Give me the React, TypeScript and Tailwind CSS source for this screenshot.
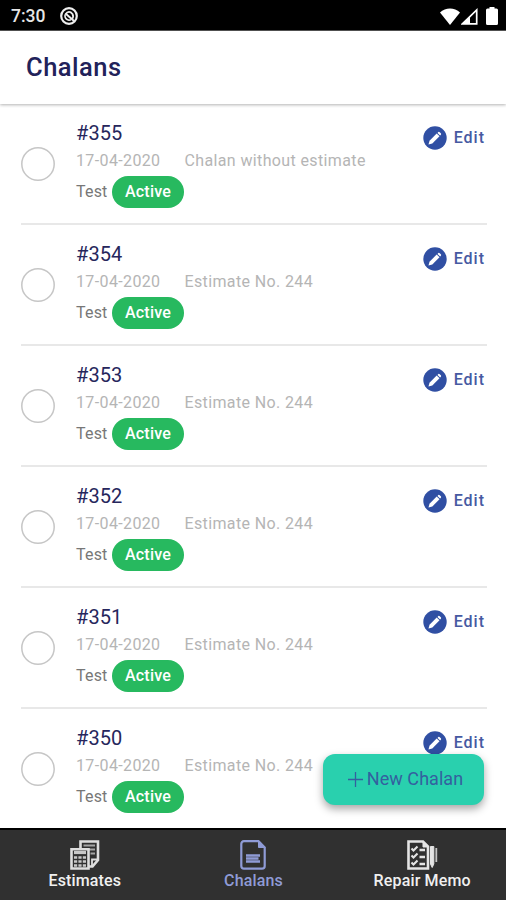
const chalans = [
  { id: 355, date: '17-04-2020', note: 'Chalan without estimate', name: 'Test', status: 'Active' },
  { id: 354, date: '17-04-2020', note: 'Estimate No. 244', name: 'Test', status: 'Active' },
  { id: 353, date: '17-04-2020', note: 'Estimate No. 244', name: 'Test', status: 'Active' },
  { id: 352, date: '17-04-2020', note: 'Estimate No. 244', name: 'Test', status: 'Active' },
  { id: 351, date: '17-04-2020', note: 'Estimate No. 244', name: 'Test', status: 'Active' },
  { id: 350, date: '17-04-2020', note: 'Estimate No. 244', name: 'Test', status: 'Active' },
];

function StatusBar() {
  return (
    <div className="h-[31px] shrink-0 bg-black border-b border-[#555] text-[#e6e6e6] flex items-center pl-[11px] pr-2">
      <span className="text-[17.500px] font-medium leading-none pt-[3px] w-[49px]">7:30</span>
      <svg viewBox="0 0 18 18" className="w-[18px] h-[18px] mt-0.5" fill="none" stroke="#eee">
        <circle cx="9" cy="9" r="7.800" strokeWidth="2.200" />
        <path d="M5.300 7.500Q9 2.500 12.500 7Q14 10 12 12" strokeWidth="1.800" />
        <path d="M5 7.500Q4.500 12.500 9 13.200L11 12.800" strokeWidth="1.600" />
        <path d="M5.500 6.500L14 14" strokeWidth="2" />
      </svg>
      <div className="ml-auto flex items-center pt-0.5">
        <svg viewBox="0 0 20 17" className="w-5 h-[17px]" fill="#fff">
          <path d="M0 4.500C5.500-.8 14.500-.8 20 4.500L10 17z" />
        </svg>
        <svg viewBox="0 0 17 17" className="w-[17px] h-[17px] ml-px" fill="none" stroke="#fff">
          <path d="M1.500 15.800H15.700V2z" strokeWidth="1.700" />
          <path d="M1 16L9 8.500V16z" fill="#fff" stroke="none" />
        </svg>
        <svg viewBox="0 0 12 18" className="w-3 h-[18px] ml-2" fill="#fff">
          <path d="M3.500 0h5v1.500H10.500Q12 1.500 12 3V16.500Q12 18 10.500 18H1.500Q0 18 0 16.500V3Q0 1.500 1.500 1.500H3.500z" />
        </svg>
      </div>
    </div>
  );
}

function EditButton() {
  return (
    <button className="flex items-center gap-[7px] h-6 mt-[22px] text-[#4659a2]">
      <svg viewBox="0 0 24 24" className="w-6 h-6">
        <circle cx="12" cy="12" r="11.700" fill="#304fa3" />
        <path d="M5.500 18.500L6.500 14.700L13.700 7.500L16.500 10.300L9.300 17.500z" fill="#fff" />
        <path d="M14.500 6.900L15.300 6.100Q16 5.600 16.700 6.200L17.800 7.300Q18.400 8 17.900 8.700L17.100 9.500z" fill="#fff" />
      </svg>
      <span className="text-[16px] font-medium tracking-[1px]">Edit</span>
    </button>
  );
}

function ChalanRow({ chalan }: { chalan: (typeof chalans)[number] }) {
  return (
    <div className="h-[121.1px] shrink-0 ml-[21px] mr-[19px] flex items-start border-b-2 border-[#e8e8e8] last:border-transparent">
      <svg viewBox="0 0 34 34" className="w-[34px] h-[34px] mt-[43px]" fill="none">
        <circle cx="17" cy="17" r="16.200" stroke="#c6c6c6" strokeWidth="1.500" />
      </svg>
      <div className="ml-[21px] pt-[17px]">
        <div className="text-[20px] leading-6 text-[#26265c] tracking-[0.1px]">#{chalan.id}</div>
        <div className="mt-[5px] flex text-[16px] leading-[22px] text-[#b5b5b5] tracking-[0.37px]">
          <span className="w-[108.500px]">{chalan.date}</span>
          <span>{chalan.note}</span>
        </div>
        <div className="mt-1 flex items-center">
          <span className="w-9 text-[16px] leading-6 pb-px text-[#777] tracking-[0.2px]">{chalan.name}</span>
          <span className="w-[72px] h-8 rounded-full bg-[#27b95f] text-white text-[16px] font-medium leading-8 text-center tracking-[0.2px]">
            {chalan.status}
          </span>
        </div>
      </div>
      <div className="ml-auto pr-0.5">
        <EditButton />
      </div>
    </div>
  );
}

function EstimatesIcon() {
  return (
    <svg viewBox="0 0 30 30" className="w-[30px] h-[30px]" fill="none" stroke="#dedede">
      <path d="M10.500 8V1.500H28V20L22.500 26.500H19" strokeWidth="2.600" />
      <path d="M28 19.500H22V26" strokeWidth="1.800" />
      <path d="M13.500 5.500H25M19 9.500H25M20.500 13.500H25" strokeWidth="2.200" stroke="#a5a5a5" />
      <path d="M1.500 9.200H18.500V28.500H1.500z" strokeWidth="2.600" fill="#303030" />
      <path d="M4 12.500H16" strokeWidth="3.200" stroke="#c8c8c8" />
      <path d="M4 17.500H16M4 21.500H16M4 25.500H16" strokeWidth="2.600" strokeDasharray="3.200 1.200" stroke="#c8c8c8" />
    </svg>
  );
}

function ChalansIcon() {
  return (
    <svg viewBox="0 0 26 30" className="w-[26px] h-[30px]" fill="none" stroke="#8f9bd6">
      <path d="M4 1.200H18.500L24.700 7.500V26Q24.700 28.700 22 28.700H4Q1.300 28.700 1.300 26V4Q1.300 1.200 4 1.200z" strokeWidth="2.200" />
      <path d="M18.500 1V7.500H25z" fill="#8f9bd6" strokeWidth="1" />
      <path d="M6 15.500H20M6 18.500H18.500M6 21.500H20" strokeWidth="2.400" />
    </svg>
  );
}

function RepairIcon() {
  return (
    <svg viewBox="0 0 31 30" className="w-[31px] h-[30px]" fill="none" stroke="#e4e4e4">
      <path d="M1.500 1.500H16L21 6.500V28.500H1.500z" strokeWidth="2.600" />
      <path d="M16 1V7H22z" fill="#e4e4e4" strokeWidth="1" />
      <path d="M4.500 8.500L6.500 10.500L10.500 6.500M4.500 15.500L6.500 17.500L10.500 13.500M4.500 22.500L6.500 24.500L10.500 20.500" strokeWidth="2.100" />
      <path d="M12.500 10H18M12.500 17H18M12.500 24H18" strokeWidth="2.400" />
      <path d="M23.500 6.500H26.800V24L25.200 27.500L23.500 24z" fill="#e4e4e4" strokeWidth="1" />
      <path d="M29.300 8V22" strokeWidth="1.800" stroke="#c4c4c4" />
    </svg>
  );
}

const tabs = [
  { label: 'Estimates', icon: <EstimatesIcon />, color: 'text-[#f0f0f0]' },
  { label: 'Chalans', icon: <ChalansIcon />, color: 'text-[#8f9bd6]' },
  { label: 'Repair Memo', icon: <RepairIcon />, color: 'text-[#f0f0f0]' },
];

export default function App() {
  return (
    <div className="relative w-[506px] h-[900px] overflow-hidden bg-white flex flex-col font-[Roboto,sans-serif]">
      <StatusBar />
      <header className="relative z-10 h-[73px] shrink-0 bg-white pl-[26px] flex items-center shadow-[0_1px_3px_rgba(0,0,0,0.3)]">
        <h1 className="text-[25.500px] font-medium leading-none text-[#22225a] tracking-[0.500px]">Chalans</h1>
      </header>

      <main className="h-[724px] shrink-0 overflow-hidden flex flex-col">
        {chalans.map((chalan) => (
          <ChalanRow key={chalan.id} chalan={chalan} />
        ))}
      </main>

      {/* Floating action button */}
      <button className="absolute left-[323px] top-[754px] w-[161px] h-[51px] rounded-[12px] bg-[#29d0ae] text-[#34609f] flex items-center justify-center gap-1 pl-1 shadow-[0_4px_9px_rgba(0,0,0,0.35)]">
        <svg viewBox="0 0 15 15" className="w-[15px] h-[15px]" fill="none" stroke="currentColor" strokeWidth="1.300">
          <path d="M7.500 0V15M0 7.500H15" />
        </svg>
        <span className="text-[18px] tracking-[0.05px] pb-0.5">New Chalan</span>
      </button>

      <nav className="h-[72px] shrink-0 bg-[#303030] border-t-2 border-black grid grid-cols-3">
        {tabs.map((tab) => (
          <div key={tab.label} className={`flex flex-col items-center pt-[10px] pl-px ${tab.color}`}>
            {tab.icon}
            <span className="text-[16px] font-medium leading-5 pt-px tracking-[0.15px]">{tab.label}</span>
          </div>
        ))}
      </nav>
    </div>
  );
}
